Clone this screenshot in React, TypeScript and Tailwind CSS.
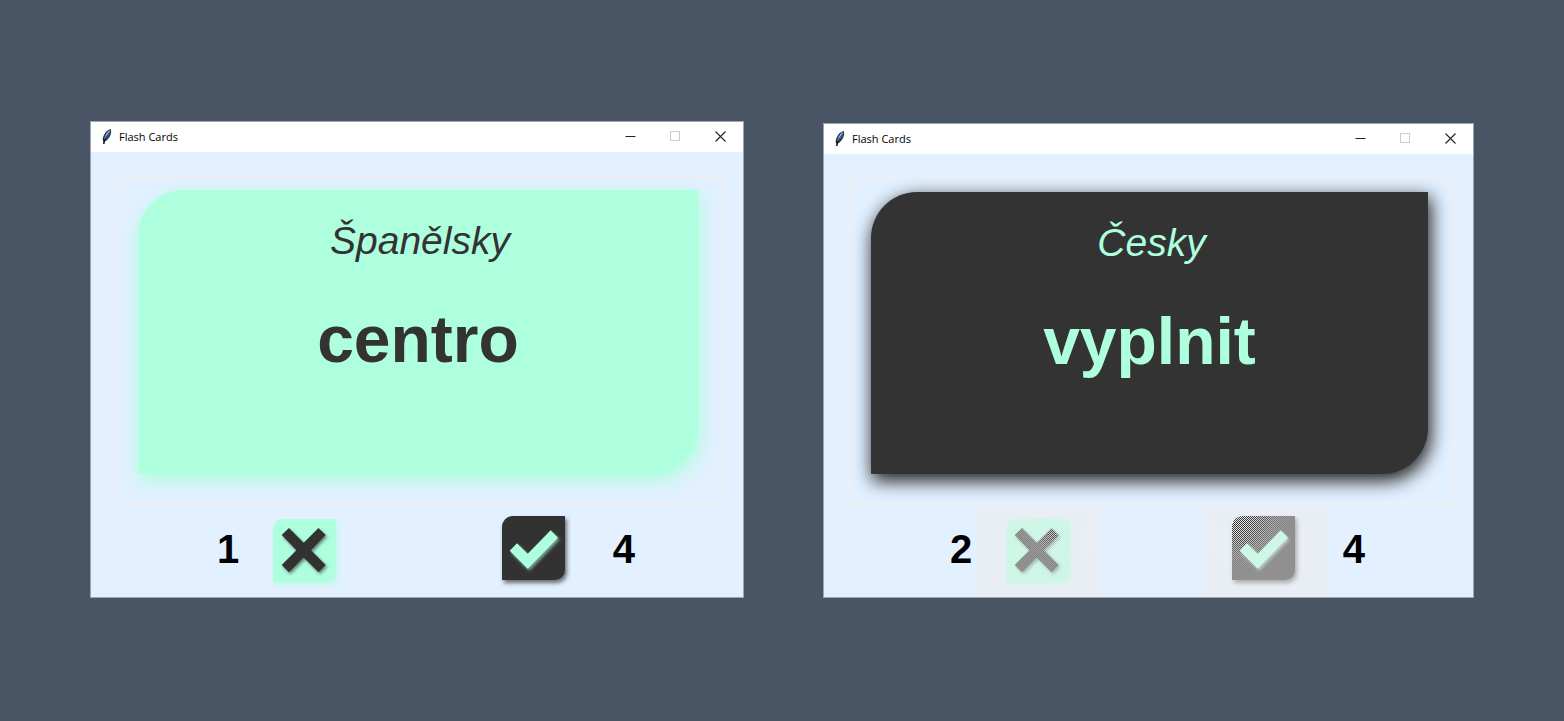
import { clsx } from "clsx";

type Theme = "mint" | "dark";

interface FlashWindowProps {
  theme: Theme;
  language: string;
  word: string;
  wrong: number;
  right: number;
  disabled?: boolean;
}

function FeatherIcon() {
  return (
    <svg viewBox="0 0 16 16" className="size-4 shrink-0" aria-hidden="true">
      <path d="M11.8 0 C8 0.6 4 5.4 3.6 10.8 L4.8 12.8 C8.8 11.6 11.6 7.4 12.2 3 Z" fill="#2b3442" />
      <path d="M11 1.2 C8.2 2.6 5.6 6.6 5 10.6 C8 9.2 10.4 6 11.2 2.8 Z" fill="#4a86cc" />
      <path d="M10.8 1.4 C8.6 2.6 7 4.6 6.2 7.4 L9.6 4 Z" fill="#a9c6e6" />
      <path d="M10.4 3.2 L5.6 11" stroke="#1b2c44" strokeWidth="0.7" fill="none" />
      <path d="M5.4 10.4 L4.8 15" stroke="#0c0c0c" strokeWidth="1.5" fill="none" />
    </svg>
  );
}

function TitleBar() {
  const button = "flex h-[29px] w-[45px] items-center justify-center";
  return (
    <header className="flex h-[30px] items-center bg-white pl-2">
      <FeatherIcon />
      <h1 className="ml-1 flex-1 text-[11px] leading-[16px] text-black font-['Open_Sans','Noto_Sans',sans-serif]">
        Flash Cards
      </h1>
      <div className="flex h-full items-start">
        <button type="button" aria-label="Minimize" className={button}>
          <svg viewBox="0 0 11 11" className="size-[11px]">
            <path d="M0.5 5.5 H10.5" stroke="#222" />
          </svg>
        </button>
        <button type="button" aria-label="Maximize" disabled className={button}>
          <svg viewBox="0 0 11 11" className="size-[11px]">
            <rect x="0.5" y="0.5" width="9" height="9" fill="none" stroke="#ccc" />
          </svg>
        </button>
        <button type="button" aria-label="Close" className={button}>
          <svg viewBox="0 0 11 11" className="size-[11px]">
            <path d="M0.5 0.5 L10.5 10.5 M10.5 0.5 L0.5 10.5" stroke="#222" strokeWidth="1.1" />
          </svg>
        </button>
      </div>
    </header>
  );
}

function AnswerButton({ kind, disabled }: { kind: "wrong" | "right"; disabled?: boolean }) {
  const id = `${kind}-${disabled ? "off" : "on"}`;
  const isWrong = kind === "wrong";
  const tile = isWrong ? "#aeffde" : "#333333";
  const mark = isWrong ? "#333333" : "#aeffde";
  return (
    <button
      type="button"
      disabled={disabled}
      aria-label={isWrong ? "Wrong" : "Right"}
      className={clsx("h-[91px] w-[124px] shrink-0", disabled && "bg-[#e4eefa]")}
    >
      <svg viewBox="0 0 124 91" className="block h-[91px] w-[124px]">
        <defs>
          <filter id={`tile-${id}`} x="-20%" y="-20%" width="150%" height="150%">
            <feDropShadow dx="2" dy="3" stdDeviation="2" floodColor={tile} floodOpacity="0.7" />
          </filter>
          <filter id={`mark-${id}`} x="-20%" y="-20%" width="150%" height="150%">
            <feDropShadow dx="1.5" dy="2" stdDeviation="1.4" floodColor={mark} floodOpacity="0.6" />
          </filter>
          <pattern id={`dither-${id}`} width="2" height="2" patternUnits="userSpaceOnUse">
            <path d="M0 0h1v1h-1z M1 1h1v1h-1z" fill="#eeeeee" shapeRendering="crispEdges" />
          </pattern>
          <radialGradient
            id={`fade-${id}`}
            gradientUnits="userSpaceOnUse"
            cx={isWrong ? 94 : 30}
            cy="8"
            r="62"
          >
            <stop offset="0.3" stopColor="#fff" />
            <stop offset="1" stopColor="#000" />
          </radialGradient>
          <radialGradient
            id={`flat-${id}`}
            gradientUnits="userSpaceOnUse"
            cx={isWrong ? 94 : 30}
            cy="8"
            r="62"
          >
            <stop offset="0.3" stopColor="#eeeeee" stopOpacity="0" />
            <stop offset="0.65" stopColor="#eeeeee" stopOpacity="0.36" />
            <stop offset="1" stopColor="#eeeeee" stopOpacity="0.5" />
          </radialGradient>
          <mask id={`mask-${id}`} maskUnits="userSpaceOnUse" x="0" y="0" width="124" height="91">
            <rect width="124" height="91" fill={`url(#fade-${id})`} />
          </mask>
        </defs>
        <g transform={isWrong ? "translate(29 13)" : "translate(29 10)"}>
          <path
            d={
              isWrong
                ? "M10 0 H63 V53 A10 10 0 0 1 53 63 H0 V10 A10 10 0 0 1 10 0 Z"
                : "M11 0 H63 V54 A10 10 0 0 1 53 64 H0 V11 A11 11 0 0 1 11 0 Z"
            }
            fill={tile}
            filter={`url(#tile-${id})`}
          />
          {isWrong ? (
            <path
              d="M16 9 L30.7 23.8 L45.5 9 L52.7 16 L38 31.2 L52.7 46 L45.5 53.3 L30.7 38.6 L16 53.3 L8.7 46 L23.4 31.2 L8.7 16 Z"
              fill={mark}
              filter={`url(#mark-${id})`}
            />
          ) : (
            <path
              d="M7.7 34.7 L15 27.3 L25.7 37.7 L48.7 14.3 L56 21.7 L25.7 52.7 Z"
              fill={mark}
              filter={`url(#mark-${id})`}
            />
          )}
        </g>
        {disabled && (
          <>
            <rect width="124" height="91" fill={`url(#dither-${id})`} mask={`url(#mask-${id})`} />
            <rect width="124" height="91" fill={`url(#flat-${id})`} />
          </>
        )}
      </svg>
    </button>
  );
}

function FlashWindow({ theme, language, word, wrong, right, disabled }: FlashWindowProps) {
  return (
    <section className="border border-[#9aa6b4] bg-[#e2f0ff]">
      <TitleBar />
      <div className="pt-6">
        <div className="ml-[25px] mr-[18px] border-2 border-[#eeeef0] pt-3 pr-[25px] pb-[30px] pl-5">
          <article
            className={clsx(
              "rounded-tl-[46px] rounded-br-[46px] text-center",
              theme === "mint"
                ? "h-[284px] bg-[#aeffde] text-[#333333] shadow-[2px_6px_18px_1px_#aeffde]"
                : "h-[282px] bg-[#333333] text-[#aeffde] shadow-[2px_6px_18px_1px_#222222]",
            )}
          >
            <p className="pt-7 pl-1 text-[39px] leading-[46px] italic">{language}</p>
            <p className="pt-9 text-[66px] leading-[78px] font-bold">{word}</p>
          </article>
        </div>
        <div className="flex items-center justify-between pr-[108px] pl-[126px] text-[40px] leading-[46px] font-bold text-black">
          <div className="flex items-center gap-[5px]">
            <span className="pb-1.5">{wrong}</span>
            <AnswerButton kind="wrong" disabled={disabled} />
          </div>
          <div className="flex items-center gap-4">
            <AnswerButton kind="right" disabled={disabled} />
            <span className="pb-1.5">{right}</span>
          </div>
        </div>
      </div>
    </section>
  );
}

export default function App() {
  return (
    <main className="grid min-h-screen grid-cols-[654fr_651fr] content-start items-end gap-[79px] bg-[#495564] px-[90px] py-[121px] font-['Liberation_Sans',Arial,sans-serif]">
      <FlashWindow theme="mint" language="Španělsky" word="centro" wrong={1} right={4} />
      <FlashWindow theme="dark" language="Česky" word="vyplnit" wrong={2} right={4} disabled />
    </main>
  );
}
